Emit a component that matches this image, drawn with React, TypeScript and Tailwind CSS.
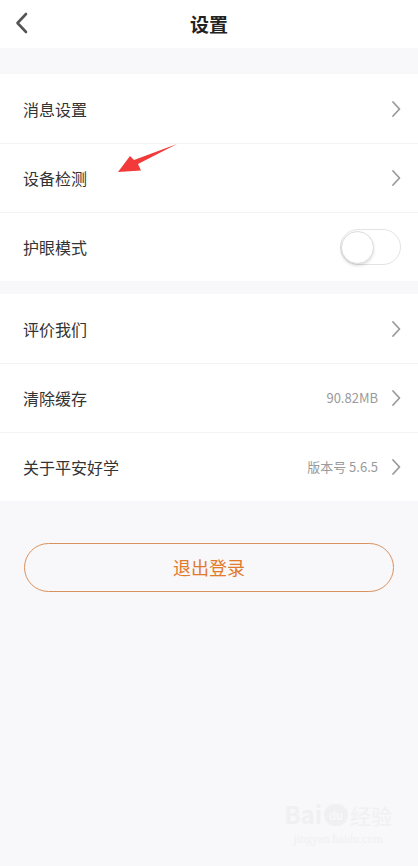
import React from "react";

type Row = {
  label: string;
  value?: string;
  toggle?: boolean;
};

const sectionOne: Row[] = [
  { label: "消息设置" },
  { label: "设备检测" },
  { label: "护眼模式", toggle: true },
];

const sectionTwo: Row[] = [
  { label: "评价我们" },
  { label: "清除缓存", value: "90.82MB" },
  { label: "关于平安好学", value: "版本号 5.6.5" },
];

function Chevron() {
  return (
    <svg width="10" height="18" viewBox="0 0 10 18" fill="none">
      <path
        d="M2 2l6.5 7L2 16"
        stroke="#9a9a9a"
        strokeWidth="1.8"
        strokeLinecap="round"
        strokeLinejoin="round"
      />
    </svg>
  );
}

function Toggle() {
  return (
    <div className="relative w-[61px] h-[36px] rounded-full border border-[#e3e3e3] bg-white">
      <div className="absolute left-[0px] top-[1px] w-[33px] h-[33px] rounded-full bg-white border border-[#dcdcdc] shadow-[0_2px_3px_rgba(0,0,0,0.12)]" />
    </div>
  );
}

function SettingRow({ row, first }: { row: Row; first: boolean }) {
  return (
    <div
      className={`flex items-center h-[69px] pl-[23px] pr-[17px] ${
        first ? "" : "border-t border-[#f3f3f5]"
      }`}
    >
      <span className="flex-1 text-[16px] text-[#333]">{row.label}</span>
      {row.toggle ? (
        <Toggle />
      ) : (
        <div className="flex items-center gap-[13px]">
          {row.value && (
            <span className="text-[13px] text-[#9a9a9a]">{row.value}</span>
          )}
          <Chevron />
        </div>
      )}
    </div>
  );
}

export default function App() {
  return (
    <div
      className="relative min-h-screen bg-[#f8f7fa]"
      style={{ fontFamily: '"Noto Sans CJK SC", "Noto Sans", sans-serif' }}
    >
      <header className="relative flex items-center justify-center h-[48px] bg-white">
        <svg
          className="absolute left-[14px] top-[12px]"
          width="16"
          height="22"
          viewBox="0 0 16 22"
          fill="none"
        >
          <path
            d="M12 2L3.5 11 12 20"
            stroke="#555"
            strokeWidth="2.6"
            strokeLinecap="round"
            strokeLinejoin="round"
          />
        </svg>
        <h1 className="text-[19px] font-semibold text-[#222]">设置</h1>
      </header>

      <div className="h-[26px]" />

      <section className="bg-white">
        {sectionOne.map((row, i) => (
          <SettingRow key={row.label} row={row} first={i === 0} />
        ))}
      </section>

      <div className="h-[13px]" />

      <section className="bg-white">
        {sectionTwo.map((row, i) => (
          <SettingRow key={row.label} row={row} first={i === 0} />
        ))}
      </section>

      <div className="px-[24px] pt-[42px]">
        <button className="w-full h-[49px] rounded-full border-[1.5px] border-[#d9925e] text-[18px] text-[#e27a2c]">
          退出登录
        </button>
      </div>

      {/* annotation arrow */}
      <svg
        className="absolute left-0 top-0 pointer-events-none"
        width="418"
        height="200"
        viewBox="0 0 418 200"
      >
        <polygon
          points="177,144 138,164 141,170.5 118,172 130,156 134,160"
          fill="#f23a3a"
        />
      </svg>

      {/* watermark */}
      <div className="absolute right-[26px] bottom-[18px] flex flex-col items-center text-[#f0f0f2] pointer-events-none">
        <div className="flex items-end leading-none">
          <span className="text-[24px] font-bold">Bai</span>
          <span className="relative mx-[2px] flex items-center justify-center w-[24px] h-[22px] rounded-full bg-[#f0f0f2] text-[11px] font-bold text-[#f8f7fa]">
            du
          </span>
          <span className="text-[21px]">经验</span>
        </div>
        <span className="text-[12px] mt-[4px]" style={{ fontFamily: '"Liberation Serif", serif' }}>
          jingyan.baidu.com
        </span>
      </div>
    </div>
  );
}
